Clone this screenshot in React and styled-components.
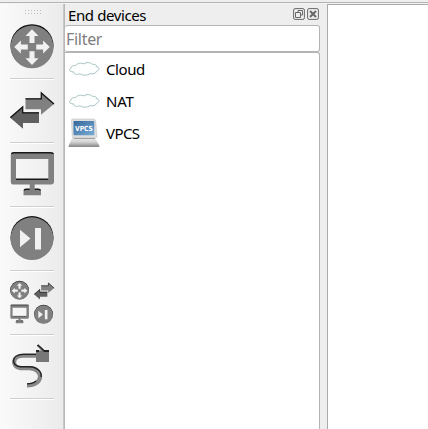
import React from "react";
import styled, { createGlobalStyle } from "styled-components";

const GlobalStyle = createGlobalStyle`
  * { box-sizing: border-box; }
  body { margin: 0; overflow: hidden; font-family: "Noto Sans", "Open Sans", sans-serif; }
`;

const Window = styled.div`
  width: 428px;
  height: 429px;
  display: flex;
  flex-direction: column;
  background: #eeeeee;
  overflow: hidden;
`;

const TopEdge = styled.div`
  flex: none;
  height: 4px;
  border-top: 2px solid #eeeeee;
  border-bottom: 1px solid #f3f3f3;
  background: #b4b4b4;
`;

const Workspace = styled.div`
  flex: 1;
  display: flex;
`;

const Toolbar = styled.nav`
  width: 63px;
  display: flex;
  flex-direction: column;
  align-items: center;
  padding: 5px 0 0 1px;
  background: linear-gradient(90deg, #fafafa, #f5f5f5 35%, #ebebeb);
`;

const Grip = styled.svg`
  flex: none;
  display: block;
  width: 44px;
  height: 7px;
  fill: #bdbdbd;
`;

const ToolButton = styled.button`
  flex: none;
  display: flex;
  align-items: flex-start;
  width: 44px;
  height: 64px;
  padding: 0;
  border: 0;
  border-bottom: 1px solid #fff;
  background: linear-gradient(#cfcfcf, #cfcfcf) bottom / 100% 1px no-repeat;
`;

const ToolIcon = styled.svg`
  display: block;
  width: 44px;
  height: 62px;
  margin-top: -1px;
  overflow: visible;
`;

const Dock = styled.section`
  width: 256px;
  display: flex;
  flex-direction: column;
  border-left: 1px solid #b8b8b8;
  box-shadow: -1px 0 0 #c8c8c8;
  margin-left: 1px;
`;

const DockTitle = styled.header`
  height: 21px;
  display: flex;
  align-items: center;
  padding: 1px 1px 0 3px;
  font-size: 15px;
  line-height: 20px;
  letter-spacing: ${(p) => p.$tracking};
  color: #000;
`;

const TitleText = styled.span`
  flex: 1;
`;

const DockIcon = styled.svg`
  width: 12px;
  height: 12px;
  margin: 0 0 2px 2px;
`;

const FilterInput = styled.input`
  height: 27px;
  width: 255px;
  border: 1px solid #b4b4b4;
  border-left-width: 0;
  border-radius: 3px;
  padding: 0 2px 0 1px;
  background: #fff;
  font: 16px "Noto Sans", sans-serif;
  letter-spacing: -0.3px;
  outline: none;
  &::placeholder { color: #808080; opacity: 1; }
`;

const DeviceList = styled.ul`
  flex: 1;
  width: 255px;
  margin: 0;
  padding: 0 0 0 3px;
  list-style: none;
  background: #fff;
  border: 1px solid #b4b4b4;
  border-width: 1px 1px 0 0;
  border-radius: 0 3px 0 0;
`;

const DeviceRow = styled.li`
  height: 32px;
  display: flex;
  align-items: center;
  font-size: 15px;
  letter-spacing: ${(p) => p.$tracking};
`;

const DeviceIcon = styled.svg`
  width: 32px;
  height: 32px;
  margin-right: 6px;
  overflow: visible;
`;

const Canvas = styled.main`
  flex: 1;
  margin-left: 7px;
  background: #fff;
  border-left: 1px solid #aaa;
  border-top: 1px solid #aaa;
`;

/* Toolbar glyphs share one 44 x 62 cell */
const RouterGlyph = () => (
  <>
    <circle cx="22" cy="30.7" r="21.5" fill="#111" />
    <circle cx="22" cy="31.9" r="21.4" fill="#808080" />
    <g fill="#f1f1f1">
      {[0, 90, 180, 270].map((a) => (
        <path key={a} d="M22 14.3 28.5 21H24.5V27.9H19.5V21H15.5Z" transform={`rotate(${a} 22 32.1)`} />
      ))}
    </g>
  </>
);

const SwitchGlyph = () => (
  <g transform="translate(0 .7)">
    <path d="M15.5 18.5H31V12.3L44 24.2 31 35V29.6H15.5Z" fill="#808080" />
    <path d="M15.5 19.2H31.3V13.2L44 24.4" fill="none" stroke="#151515" strokeWidth="1.3" />
    <path d="M29 32.5H13V26.5L0 37.8 13 49V43.3H29Z" fill="#606060" />
    <path d="M29 33.2H12.7V27.2L.4 37.8" fill="none" stroke="#151515" strokeWidth="1.3" />
  </g>
);

const MonitorGlyph = () => (
  <>
    <path fillRule="evenodd" d="M3 9.3H41Q44 9.3 44 12V38.5Q44 41.5 41 41.5H24.7V46H29Q31 46 31 49V52.3H13.5V49Q13.5 46 15.5 46H19.7V41.5H3Q.8 41.5.8 38.5V12Q.8 9.3 3 9.3ZM6 16V36.8H38.3V16Z" fill="#808080" />
    <path d="M1.5 11Q2 9.7 3.5 9.7H40.5Q43 9.7 43.5 11M6 36.2H38.3M14 47.5Q14.5 46.3 16 46.3H19.7M24.7 46.3H28.5Q30 46.3 30.5 47.5" fill="none" stroke="#181818" strokeWidth="1.4" />
  </>
);

const SecurityGlyph = () => (
  <>
    <circle cx="22" cy="30.5" r="21.5" fill="#111" />
    <circle cx="22" cy="31.7" r="21.4" fill="#808080" />
    <path d="M10 22.7 20.5 31.6 10 40.3ZM25 21H31V42.5H25Z" fill="#f1f1f1" />
  </>
);

const AllGlyph = () => (
  <g transform="translate(0 .6)">
    <g transform="translate(0 5.1) scale(.434)"><RouterGlyph /></g>
    <g transform="translate(24 5) scale(.46)"><SwitchGlyph /></g>
    <g transform="translate(0 29.2) scale(.43)"><MonitorGlyph /></g>
    <g transform="translate(24 29.2) scale(.434)"><SecurityGlyph /></g>
  </g>
);

const CableGlyph = () => (
  <>
    <g fill="none" strokeWidth="4.2">
      <path d="M27 20.7H13.5C1.5 20.7 1.5 32 10.5 33.2H19.5C34 34 34 50.2 17 50.4" stroke="#888" />
      <path d="M27 19.4H13C.8 19.6.8 31 10.5 31.8H19.5C28 32.3 32 37 31 42M17 48.9C21 48.8 24 47.9 26 46" stroke="#222" strokeWidth="1.4" />
    </g>
    <path d="M26 15.3H39V27H26Z" fill="#777" />
    <path d="M26 16H29M34 16H39M27.5 10 34.5 16.5" fill="none" stroke="#222" strokeWidth="2" />
    <path d="M28 11.3 33.5 17" stroke="#777" strokeWidth="1" />
  </>
);

const CloudGlyph = () => (
  <path
    d="M7.5 12.7C9 10 13.5 9.5 16 11 18 8.9 22.5 9.2 24.3 11.3 27 10.8 28.8 12 28.2 13.6 31.7 14 32 17 28.5 18.3 28 20.8 24.3 21.3 22 20.6 19.5 22.7 13.8 22.6 12 20.8 8.5 22 5.5 21 5.8 19 1 18.7.2 16.8 3 15.5 2.3 13.5 5 12.2 7.5 12.7Z"
    fill="#fdfefe"
    stroke="#a9c2c2"
    strokeWidth="1"
  />
);

const VpcsGlyph = () => (
  <>
    <defs>
      <linearGradient id="screen" x2="1" y2="1">
        <stop stopColor="#35669b" /><stop offset="1" stopColor="#78acd5" />
      </linearGradient>
      <linearGradient id="base" x2="0" y2="1">
        <stop stopColor="#eeeeee" /><stop offset=".5" stopColor="#d4d4d4" /><stop offset="1" stopColor="#858585" />
      </linearGradient>
    </defs>
    <path d="M4.5 20H26.5L31.3 28.5V30H.7V28.5Z" fill="url(#base)" />
    <path d="M4.5 2H25.5Q27.2 2 27.7 4L29 19.5Q29 21 27 21H6Q4.5 21 4.3 19.5L3.5 4Q3.3 2 4.5 2Z" fill="#dedede" stroke="#c4c4c4" strokeWidth=".6" />
    <rect x="5.5" y="4" width="20.8" height="14.3" rx=".8" fill="url(#screen)" />
    <path d="M6 21.5H27" stroke="#a0a0a0" />
    <text x="16" y="13.8" textAnchor="middle" fill="#fff" fontFamily="DejaVu Sans, sans-serif" fontWeight="700" fontSize="7" letterSpacing="0" textLength="17.8" lengthAdjust="spacingAndGlyphs">VPCS</text>
  </>
);

const tools = [
  ["Routers", RouterGlyph],
  ["Switches", SwitchGlyph],
  ["End devices", MonitorGlyph],
  ["Security devices", SecurityGlyph],
  ["All devices", AllGlyph],
  ["Add a link", CableGlyph],
];

const devices = [
  ["Cloud", CloudGlyph, "-0.4px"],
  ["NAT", CloudGlyph, "-0.2px"],
  ["VPCS", VpcsGlyph, "-0.6px"],
];

export default function App() {
  return (
    <Window>
      <GlobalStyle />
      <TopEdge />
      <Workspace>
        <Toolbar>
          <Grip viewBox="0 0 44 7">
            {[0, 1, 2, 3, 4, 5].map((i) => (
              <React.Fragment key={i}>
                <rect x={15 + i * 3} y="1" width="1" height="1" />
                <rect x={15 + i * 3} y="4" width="1" height="1" />
              </React.Fragment>
            ))}
          </Grip>
          {tools.map(([label, Glyph]) => (
            <ToolButton key={label} aria-label={label}>
              <ToolIcon viewBox="0 0 44 62"><Glyph /></ToolIcon>
            </ToolButton>
          ))}
        </Toolbar>
        <Dock>
          <DockTitle $tracking="-0.4px">
            <TitleText>End devices</TitleText>
            <DockIcon viewBox="0 0 12 12" fill="none" stroke="#686868">
              <rect x=".6" y=".6" width="10.8" height="10.8" rx="1.5" />
              <path d="M5 4.5V2.5H9.5V7H7.5M2.5 4.5H7.5V9.5H2.5Z" />
            </DockIcon>
            <DockIcon viewBox="0 0 12 12" fill="none" stroke="#686868">
              <rect x=".6" y=".6" width="10.8" height="10.8" rx="1.5" />
              <path d="M3 3 9 9M9 3 3 9" strokeWidth="2" />
            </DockIcon>
          </DockTitle>
          <FilterInput placeholder="Filter" aria-label="Filter" />
          <DeviceList>
            {devices.map(([name, Glyph, tracking]) => (
              <DeviceRow key={name} $tracking={tracking}>
                <DeviceIcon viewBox="0 0 32 32"><Glyph /></DeviceIcon>
                {name}
              </DeviceRow>
            ))}
          </DeviceList>
        </Dock>
        <Canvas />
      </Workspace>
    </Window>
  );
}
